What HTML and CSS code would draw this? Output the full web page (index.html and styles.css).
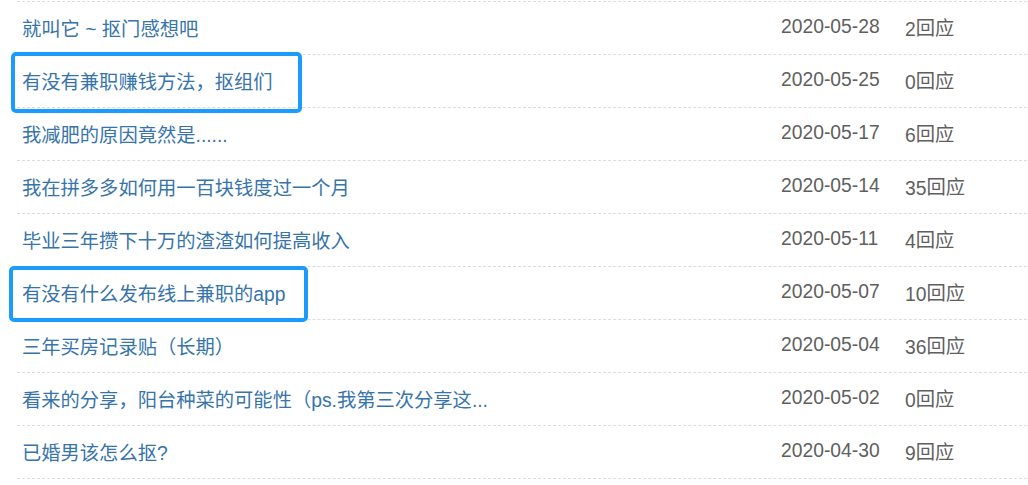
FILE: index.html
```html
<!DOCTYPE html>
<html lang="zh-CN">
<head>
<meta charset="utf-8">
<title>帖子列表</title>
<link rel="stylesheet" href="styles.css">
</head>
<body>
<div class="page">
  <div class="list">
    <div class="row"><a class="title" href="#">就叫它 ~ 抠门感想吧</a><span class="date">2020-05-28</span><span class="reply">2<span class="unit">回应</span></span></div>
    <div class="row"><a class="title" href="#">有没有兼职赚钱方法，抠组们</a><span class="date">2020-05-25</span><span class="reply">0<span class="unit">回应</span></span></div>
    <div class="row"><a class="title" href="#">我减肥的原因竟然是......</a><span class="date">2020-05-17</span><span class="reply">6<span class="unit">回应</span></span></div>
    <div class="row"><a class="title" href="#">我在拼多多如何用一百块钱度过一个月</a><span class="date">2020-05-14</span><span class="reply">35<span class="unit">回应</span></span></div>
    <div class="row"><a class="title" href="#">毕业三年攒下十万的渣渣如何提高收入</a><span class="date">2020-05-11</span><span class="reply">4<span class="unit">回应</span></span></div>
    <div class="row"><a class="title" href="#">有没有什么发布线上兼职的app</a><span class="date">2020-05-07</span><span class="reply">10<span class="unit">回应</span></span></div>
    <div class="row"><a class="title" href="#">三年买房记录贴（长期）</a><span class="date">2020-05-04</span><span class="reply">36<span class="unit">回应</span></span></div>
    <div class="row"><a class="title" href="#">看来的分享，阳台种菜的可能性（ps.我第三次分享这...</a><span class="date">2020-05-02</span><span class="reply">0<span class="unit">回应</span></span></div>
    <div class="row"><a class="title" href="#">已婚男该怎么抠?</a><span class="date">2020-04-30</span><span class="reply">9<span class="unit">回应</span></span></div>
  </div>
  <div class="mark mark-a"></div>
  <div class="mark mark-b"></div>
</div>
</body>
</html>
```

FILE: styles.css
```css
html, body {
  margin: 0;
  padding: 0;
  background: #fff;
}

.page {
  position: relative;
  padding: 1px 0 0 17px;
  width: 1011px;
  overflow: hidden;
  font-family: "Liberation Sans", "Noto Sans CJK SC", sans-serif;
}

.list {
  width: 1020px;
  border-bottom: 1px dashed #dcdcdc;
}

.row {
  display: flex;
  align-items: center;
  height: 52px;
  border-top: 1px dashed #dcdcdc;
}

.title {
  width: 759px;
  padding-left: 5px;
  font-size: 19.3px;
  color: #3674ab;
  text-decoration: none;
  white-space: nowrap;
}

.date {
  width: 124px;
  font-size: 19.3px;
  color: #5f5f5f;
  margin-top: -2px;
}

.reply {
  font-size: 19.3px;
  color: #5f5f5f;
  margin-top: -2px;
}

.unit {
  vertical-align: 1px;
}

.mark {
  position: absolute;
  border: 4.5px solid #1b9bfb;
  border-radius: 5px;
  box-sizing: border-box;
}

.mark-a {
  left: 11px;
  top: 52px;
  width: 291px;
  height: 61px;
}

.mark-b {
  left: 9px;
  top: 266px;
  width: 299px;
  height: 56px;
}
```
